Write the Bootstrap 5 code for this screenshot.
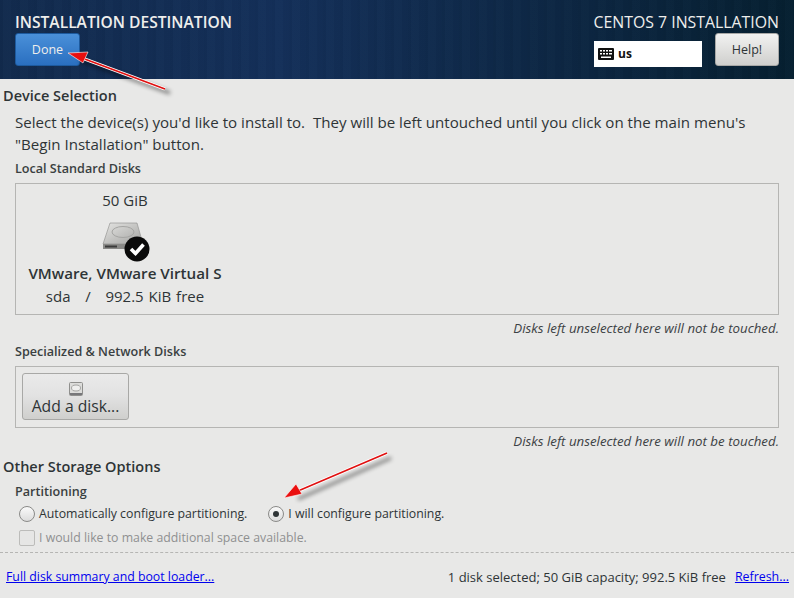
<!DOCTYPE html>
<html lang="en">
<head>
<meta charset="utf-8">
<title>Installation Destination</title>
<link rel="stylesheet" href="https://cdn.jsdelivr.net/npm/bootstrap@5.3.0/dist/css/bootstrap.min.css">
<style>
html,body{height:598px;overflow:hidden}
body{background:#e8e8e7;color:#2e3436;font-family:"Open Sans","Noto Sans",sans-serif;font-size:14px;position:relative}
.hdr{height:79px;background:repeating-linear-gradient(90deg,rgba(0,0,0,.035) 0 3px,rgba(255,255,255,.008) 3px 11px,rgba(0,0,0,.02) 11px 17px),linear-gradient(90deg,#122b4e 0%,#14305a 35%,#0d2744 70%,#062031 100%);padding:13px 15px 0;color:#eeeeec}
.hdr-title{font-size:15.6px;line-height:18px;font-weight:600}
.hdr-right{font-size:15.85px;line-height:18px}
.done-btn{width:65px;height:33px;margin-top:2px;background:linear-gradient(#4a90d9,#2a6fc0);border:1px solid #1d5a9e;border-radius:3px;color:#eeeeec;font-size:12.5px;display:flex;align-items:center;justify-content:center;padding:2px 0 0}
.help-btn{width:64px;height:33px;background:linear-gradient(#f2f2f1,#cfcfcd);border:1px solid #a8a8a6;border-radius:3px;color:#2e3436;font-size:12.5px;display:flex;align-items:center;justify-content:center;padding:2px 0 0}
.kbd-box{width:108px;height:26px;background:#fff;color:#111;font-size:12px;font-weight:700;padding-left:4px;gap:4px;margin-top:8px}
.hdr-ctrls{gap:13px;margin-top:2px}
.sect-h{font-size:14.5px;font-weight:600;line-height:20px;padding-left:3px;color:#2e3436}
.sect-one{margin-top:7px}
.sect-two{margin-top:8px}
.intro{font-size:15.1px;line-height:22px;margin:5px 15px 0}
.sub-h{font-size:12.6px;font-weight:600;line-height:16px;margin:0 15px;color:#3a3f41}
.s1{margin-top:6px}
.s2{margin-top:8px}
.s3{margin-top:7px}
.frame{margin:6px 15px 0;border:1px solid #b5b5b3}
.frame-a{height:132px;padding:5px 0 0 11px}
.frame-b{height:62px;padding:6px 0 0 6px}
.disk-tile{width:196px;text-align:center}
.d-size{font-size:15px;line-height:22px}
.d-icon{height:44px;margin-top:9px}
.d-name{font-size:15.2px;font-weight:600;line-height:20px;margin-top:-1px;white-space:nowrap}
.d-info{font-size:15px;line-height:20px;margin-top:3px;white-space:pre;word-spacing:1px}
.note{font-size:13.3px;font-style:italic;line-height:16px;text-align:right;margin:5px 15px 0 0;color:#3c4144}
.add-btn{width:107px;height:47px;background:linear-gradient(#eaeaea 0%,#e2e2e2 48%,#cfcfcd 100%);border:1px solid #a8a8a6;border-radius:3px;color:#2e3436;font-size:15.7px;line-height:18px;padding:4px 0 0;display:block;text-align:center}
.add-btn svg{display:block;margin:0 auto 1px}
.opts{margin:4px 0 0 19px;font-size:12.3px;line-height:20px;gap:21px}
.opt{gap:4px}
.rad{width:16px;height:16px;border-radius:50%;border:1px solid #8a8a88;background:linear-gradient(#fafafa,#dcdcdc);display:flex;align-items:center;justify-content:center;flex:none}
.rad-on::after{content:"";width:6px;height:6px;border-radius:50%;background:#2e3436}
.chk{width:16px;height:16px;border-radius:2px;border:1px solid #bcbcba;background:#e6e6e5;flex:none}
.opt-off{margin:4px 0 0 19px;font-size:12.3px;line-height:20px;color:#8f9091;gap:4px}
.dash{border-top:1px dashed #b5b5b3;margin-top:4px}
.foot{padding:14px 5px 0 6px;line-height:20px}
.foot a{color:#0000ee;text-decoration:underline}
.foot-left{font-size:12.3px}
.foot-r{gap:9px;font-size:13px}
.foot-link{font-size:12.4px}
.overlay{position:absolute;left:0;top:0;pointer-events:none}
</style>
</head>
<body>
<header class="hdr d-flex justify-content-between">
  <div>
    <div class="hdr-title">INSTALLATION DESTINATION</div>
    <button type="button" class="btn done-btn">Done</button>
  </div>
  <div class="d-flex flex-column align-items-end">
    <div class="hdr-right">CENTOS 7 INSTALLATION</div>
    <div class="d-flex hdr-ctrls">
      <div class="kbd-box d-flex align-items-center">
        <svg width="16" height="12" viewBox="0 0 16 12"><rect width="16" height="12" rx="1" fill="#111"/><g fill="#fff"><rect x="2" y="2" width="2" height="1.5"/><rect x="5" y="2" width="2" height="1.5"/><rect x="8" y="2" width="2" height="1.5"/><rect x="11" y="2" width="3" height="1.5"/><rect x="2" y="5" width="2" height="1.5"/><rect x="5" y="5" width="2" height="1.5"/><rect x="8" y="5" width="2" height="1.5"/><rect x="11" y="5" width="3" height="1.5"/><rect x="3" y="8.5" width="10" height="1.5"/></g></svg>
        <span>us</span>
      </div>
      <button type="button" class="btn help-btn">Help!</button>
    </div>
  </div>
</header>
<main>
  <div class="sect-h sect-one">Device Selection</div>
  <p class="intro mb-0">Select the device(s) you'd like to install to.&nbsp; They will be left untouched until you click on the main menu's<br>"Begin Installation" button.</p>
  <div class="sub-h s1">Local Standard Disks</div>
  <div class="frame frame-a">
    <div class="disk-tile">
      <div class="d-size">50 GiB</div>
      <div class="d-icon">
        <svg width="50" height="42" viewBox="0 0 50 42">
          <defs><linearGradient id="dg" x1="0" y1="0" x2="1" y2="1"><stop offset="0" stop-color="#e4e4e2"/><stop offset="1" stop-color="#a3a3a1"/></linearGradient></defs>
          <path d="M10 3 H37 L43 24 H3 Z" fill="url(#dg)" stroke="#8c8c8a" stroke-width=".6"/>
          <ellipse cx="23" cy="12" rx="11" ry="5.500" fill="none" stroke="#a5a5a3"/>
          <rect x="3" y="24" width="38" height="5" fill="#8a8a88"/>
          <rect x="5" y="25.500" width="12" height="2" fill="#3b3b3b"/>
          <circle cx="37" cy="29" r="12.500" fill="#0a0a0a"/>
          <path d="M31 29 L35.500 33.500 L43.500 24.500" fill="none" stroke="#fff" stroke-width="3.600"/>
        </svg>
      </div>
      <div class="d-name">VMware, VMware Virtual S</div>
      <div class="d-info">sda   /   992.5 KiB free</div>
    </div>
  </div>
  <div class="note">Disks left unselected here will not be touched.</div>
  <div class="sub-h s2">Specialized &amp; Network Disks</div>
  <div class="frame frame-b">
    <button type="button" class="btn add-btn">
      <svg width="14" height="14" viewBox="0 0 14 14"><rect x=".5" y=".5" width="13" height="13" rx="1" fill="#dcdcda" stroke="#8f8f8d"/><ellipse cx="7" cy="6" rx="4.500" ry="3" fill="#efefee" stroke="#a5a5a3"/><rect x="1" y="11" width="12" height="2" fill="#77777a"/></svg>
      Add a disk...
    </button>
  </div>
  <div class="note">Disks left unselected here will not be touched.</div>
  <div class="sect-h sect-two">Other Storage Options</div>
  <div class="sub-h s3">Partitioning</div>
  <div class="d-flex opts">
    <div class="d-flex align-items-center opt"><span class="rad"></span><span>Automatically configure partitioning.</span></div>
    <div class="d-flex align-items-center opt"><span class="rad rad-on"></span><span>I will configure partitioning.</span></div>
  </div>
  <div class="d-flex align-items-center opt-off"><span class="chk"></span><span>I would like to make additional space available.</span></div>
  <div class="dash"></div>
  <footer class="foot d-flex justify-content-between">
    <a href="#" class="foot-left">Full disk summary and boot loader...</a>
    <div class="d-flex foot-r"><span>1 disk selected; 50 GiB capacity; 992.5 KiB free</span><a href="#" class="foot-link">Refresh...</a></div>
  </footer>
</main>
<svg class="overlay" width="794" height="598" viewBox="0 0 794 598">
  <defs><filter id="sh" x="-20%" y="-50%" width="140%" height="200%"><feGaussianBlur stdDeviation="2"/></filter></defs>
  <g opacity=".5" filter="url(#sh)" stroke="#000" fill="none" stroke-width="3"><path d="M170 93 L80 60"/><path d="M391 458 L298 499"/></g>
  <path d="M165 89 L82 58" stroke="#fff" stroke-width="3.400" fill="none"/>
  <path d="M165 89 L82 58" stroke="#e01010" stroke-width="1.600" fill="none"/>
  <path d="M68 53 L88 52 L83 63 Z" fill="#ea0f0f" stroke="#fff" stroke-width=".6"/>
  <path d="M387 453 L298 491" stroke="#fff" stroke-width="3.400" fill="none"/>
  <path d="M387 453 L298 491" stroke="#e01010" stroke-width="1.600" fill="none"/>
  <path d="M284 498 L296 484 L302 494 Z" fill="#ea0f0f" stroke="#fff" stroke-width=".6"/>
</svg>
</body>
</html>
